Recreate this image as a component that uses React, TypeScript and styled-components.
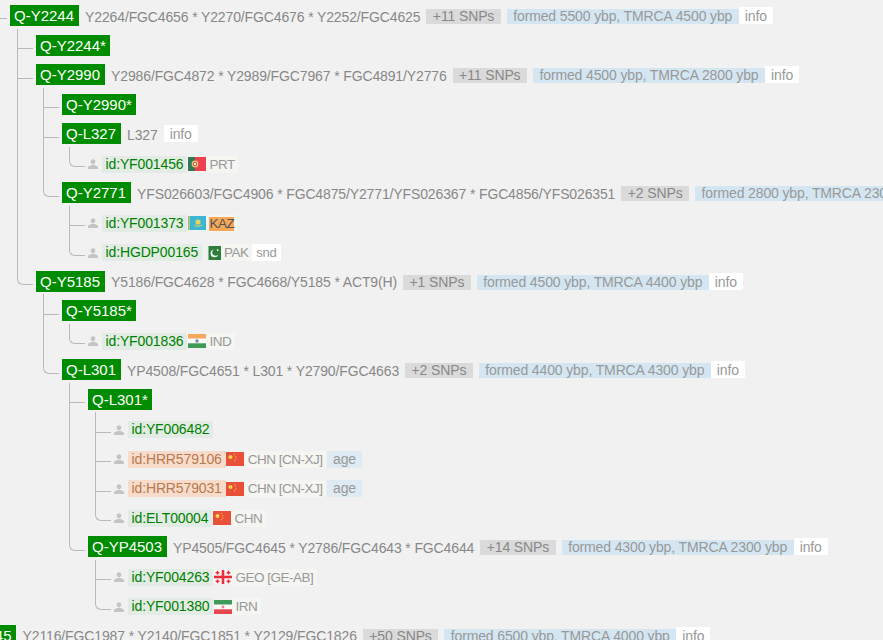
import React from "react";
import styled, { createGlobalStyle } from "styled-components";

const Global = createGlobalStyle`
  html, body { margin: 0; padding: 0; background: #f1f1f1; overflow: hidden; height: 640px; }
  body { font-family: "Liberation Sans", Arial, sans-serif; font-size: 14px; color: #888; letter-spacing: -0.13px; }
`;

const Page = styled.div`
  width: 883px;
  height: 640px;
  overflow: hidden;
  padding: 1.2px 0 0 9.5px;
  box-sizing: border-box;
`;

const Tree = styled.ul`
  list-style: none;
  margin: 0;
  padding: 0;
`;

const Branch = styled.ul`
  list-style: none;
  margin: 0;
  padding: 0 0 0 26px;
`;

const Item = styled.li<{ $last?: boolean; $root?: boolean }>`
  position: relative;
  &::before {
    content: "";
    position: absolute;
    box-sizing: border-box;
    left: -18.5px;
    top: ${(p) => (p.$root ? "17px" : "-2px")};
    width: 16px;
    height: ${(p) => (p.$root ? "1px" : "20.5px")};
    border-bottom: 1px solid #b9b9b9;
    border-left: ${(p) => (p.$root ? "0" : "1px solid #b9b9b9")};
    border-bottom-left-radius: ${(p) => (p.$last ? "6px" : "0")};
  }
  &::after {
    content: "";
    position: absolute;
    display: ${(p) => (p.$last || p.$root ? "none" : "block")};
    left: -18.5px;
    top: 0;
    bottom: 0;
    width: 1px;
    background: #b9b9b9;
  }
`;

const Row = styled.div<{ $shift?: number; $leaf?: boolean }>`
  display: flex;
  align-items: center;
  box-sizing: border-box;
  height: 29.5px;
  padding-top: ${(p) => (p.$leaf ? "2px" : "0")};
  white-space: nowrap;
  margin-left: ${(p) => p.$shift ?? 0}px;
`;

const Haplo = styled.span`
  flex: none;
  background: #008c00;
  color: #fff;
  font-size: 15px;
  letter-spacing: 0;
  line-height: 21px;
  height: 21px;
  padding: 0 4.5px;
  margin-right: 6.5px;
`;

const Snps = styled.span`
  color: #888;
  margin: 2px 6px 0 0;
`;

const SnpCount = styled.span`
  background: #dadada;
  color: #888;
  line-height: 15px;
  height: 15px;
  padding: 0 6.5px;
  margin: 2px 6px 0 0;
`;

const Age = styled.span`
  background: #d4e6f1;
  color: #999;
  line-height: 15px;
  height: 15px;
  padding: 0 6.5px;
  margin-top: 2px;
`;

const AgeTag = styled.span`
  background: #deebf3;
  color: #999;
  line-height: 17px;
  height: 17px;
  padding: 0 6px;
  margin-left: 1px;
`;

const Info = styled.span`
  background: #fff;
  color: #999;
  line-height: 19px;
  height: 17px;
  padding: 0 6px;
`;

const Person = styled.svg`
  flex: none;
  width: 10px;
  height: 10px;
  margin-right: 4px;
  color: #c4c4c4;
`;

const Sample = styled.span<{ $ancient?: boolean }>`
  flex: none;
  background: ${(p) => (p.$ancient ? "#f7dccb" : "#e2ece5")};
  color: ${(p) => (p.$ancient ? "#b8794f" : "#008000")};
  line-height: 17px;
  height: 17px;
  padding: 0 4px;
  margin-right: 0.5px;
`;

const Flag = styled.svg<{ $narrow?: boolean }>`
  flex: none;
  display: block;
  margin-left: ${(p) => (p.$narrow ? "4px" : "0")};
`;

const Country = styled.span`
  background: #f5f5f1;
  color: #999;
  font-size: 13.5px;
  letter-spacing: -0.5px;
  line-height: 18px;
  height: 17px;
  padding: 0 3.5px;
`;

const Marked = styled.span`
  background: #f7a758;
  color: #555;
  display: inline-block;
  line-height: 14px;
`;

const Lang = styled.span`
  background: #fff;
  color: #999;
  font-size: 13px;
  line-height: 18px;
  height: 17px;
  padding: 0 4px;
`;

type FlagCode = "pt" | "kz" | "pk" | "in" | "cn" | "ge" | "ir";

const FlagIcon = ({ code }: { code: FlagCode }) => {
  switch (code) {
    case "pt":
      return (
        <Flag width="18" height="14" viewBox="0 0 18 14">
          <rect width="7" height="14" fill="#2f7a55" />
          <rect x="7" width="11" height="14" fill="#ee4150" />
          <circle cx="7" cy="7" r="3.4" fill="#e8c46a" />
          <circle cx="7" cy="7" r="1.7" fill="#f1f1f1" stroke="#c8503f" />
        </Flag>
      );
    case "kz":
      return (
        <Flag width="18" height="14" viewBox="0 0 18 14">
          <rect width="18" height="14" fill="#3cb6d3" />
          <rect x="0.5" width="1.5" height="14" fill="#c8c46a" />
          <circle cx="10" cy="6" r="2.6" fill="#e8d45a" />
          <path d="M6 9.2c2 1.4 6 1.4 8 0" stroke="#e8d45a" fill="none" />
        </Flag>
      );
    case "pk":
      return (
        <Flag $narrow width="14" height="14" viewBox="0 0 14 14">
          <rect width="14" height="14" fill="#2e7d3c" />
          <rect width="1.5" height="14" fill="#e8f0ea" />
          <circle cx="7.5" cy="7.3" r="3.9" fill="#f4f8f4" />
          <circle cx="8.8" cy="6.2" r="3.5" fill="#2e7d3c" />
          <circle cx="10.6" cy="4.2" r="0.9" fill="#f4f8f4" />
        </Flag>
      );
    case "in":
      return (
        <Flag width="18" height="14" viewBox="0 0 18 14">
          <rect width="18" height="4.7" fill="#f6a85c" />
          <rect y="4.7" width="18" height="4.6" fill="#fafafa" />
          <rect y="9.3" width="18" height="4.7" fill="#3f9a5a" />
          <circle cx="9" cy="7" r="1.7" fill="#7a84b8" />
        </Flag>
      );
    case "cn":
      return (
        <Flag width="18" height="14" viewBox="0 0 18 14">
          <rect width="18" height="14" fill="#e8503a" />
          <circle cx="4.5" cy="5" r="2" fill="#f6d64a" />
          <circle cx="8.5" cy="2.5" r="0.6" fill="#f6d64a" />
          <circle cx="9.8" cy="4.5" r="0.6" fill="#f6d64a" />
          <circle cx="9.8" cy="6.8" r="0.6" fill="#f6d64a" />
          <circle cx="8.5" cy="8.8" r="0.6" fill="#f6d64a" />
        </Flag>
      );
    case "ge":
      return (
        <Flag width="18" height="14" viewBox="0 0 18 14">
          <rect width="18" height="14" fill="#fafafa" />
          <rect x="7.7" width="2.6" height="14" fill="#ee2f3a" />
          <rect y="5.7" width="18" height="2.6" fill="#ee2f3a" />
          <path d="M3.5 0.8v3.8M1.6 2.7h3.8M14.5 0.8v3.8M12.6 2.7h3.8M3.5 9.4v3.8M1.6 11.3h3.8M14.5 9.4v3.8M12.6 11.3h3.8" stroke="#ee2f3a" strokeWidth="1.5" />
        </Flag>
      );
    case "ir":
      return (
        <Flag width="18" height="14" viewBox="0 0 18 14">
          <rect width="18" height="4.7" fill="#3f9a5a" />
          <rect y="4.7" width="18" height="4.6" fill="#fafafa" />
          <rect y="9.3" width="18" height="4.7" fill="#e8474f" />
          <circle cx="9" cy="7" r="1.4" fill="#e8878b" />
        </Flag>
      );
  }
};

const PersonIcon = () => (
  <Person viewBox="0 0 10 10">
    <path d="M5 0.2c1.4 0 2.3 1 2.3 2.4S6.4 5.4 5 5.4 2.7 4 2.7 2.6 3.6 0.2 5 0.2z" fill="currentColor" />
    <path d="M0 10V8.4C0 7.2 2 6.6 3.5 6h3C8 6.6 10 7.2 10 8.4V10z" fill="currentColor" />
  </Person>
);

type Node = {
  name?: string;
  snps?: string;
  count?: string;
  age?: string;
  info?: boolean;
  id?: string;
  ancient?: boolean;
  flag?: FlagCode;
  country?: string;
  mark?: boolean;
  lang?: string;
  ageTag?: boolean;
  children?: Node[];
};

const tree: Node = {
  name: "Q-Y2244",
  snps: "Y2264/FGC4656 * Y2270/FGC4676 * Y2252/FGC4625",
  count: "+11 SNPs",
  age: "formed 5500 ybp, TMRCA 4500 ybp",
  info: true,
  children: [
    { name: "Q-Y2244*" },
    {
      name: "Q-Y2990",
      snps: "Y2986/FGC4872 * Y2989/FGC7967 * FGC4891/Y2776",
      count: "+11 SNPs",
      age: "formed 4500 ybp, TMRCA 2800 ybp",
      info: true,
      children: [
        { name: "Q-Y2990*" },
        {
          name: "Q-L327",
          snps: "L327",
          info: true,
          children: [{ id: "id:YF001456", flag: "pt", country: "PRT" }],
        },
        {
          name: "Q-Y2771",
          snps: "YFS026603/FGC4906 * FGC4875/Y2771/YFS026367 * FGC4856/YFS026351",
          count: "+2 SNPs",
          age: "formed 2800 ybp, TMRCA 2300 ybp",
          info: true,
          children: [
            { id: "id:YF001373", flag: "kz", country: "KAZ", mark: true },
            { id: "id:HGDP00165", flag: "pk", country: "PAK", lang: "snd" },
          ],
        },
      ],
    },
    {
      name: "Q-Y5185",
      snps: "Y5186/FGC4628 * FGC4668/Y5185 * ACT9(H)",
      count: "+1 SNPs",
      age: "formed 4500 ybp, TMRCA 4400 ybp",
      info: true,
      children: [
        {
          name: "Q-Y5185*",
          children: [{ id: "id:YF001836", flag: "in", country: "IND" }],
        },
        {
          name: "Q-L301",
          snps: "YP4508/FGC4651 * L301 * Y2790/FGC4663",
          count: "+2 SNPs",
          age: "formed 4400 ybp, TMRCA 4300 ybp",
          info: true,
          children: [
            {
              name: "Q-L301*",
              children: [
                { id: "id:YF006482" },
                { id: "id:HRR579106", ancient: true, flag: "cn", country: "CHN [CN-XJ]", ageTag: true },
                { id: "id:HRR579031", ancient: true, flag: "cn", country: "CHN [CN-XJ]", ageTag: true },
                { id: "id:ELT00004", flag: "cn", country: "CHN" },
              ],
            },
            {
              name: "Q-YP4503",
              snps: "YP4505/FGC4645 * Y2786/FGC4643 * FGC4644",
              count: "+14 SNPs",
              age: "formed 4300 ybp, TMRCA 2300 ybp",
              info: true,
              children: [
                { id: "id:YF004263", flag: "ge", country: "GEO [GE-AB]" },
                { id: "id:YF001380", flag: "ir", country: "IRN" },
              ],
            },
          ],
        },
      ],
    },
  ],
};

const nextTree: Node = {
  name: "Q-Y2145",
  snps: "Y2116/FGC1987 * Y2140/FGC1851 * Y2129/FGC1826",
  count: "+50 SNPs",
  age: "formed 6500 ybp, TMRCA 4000 ybp",
  info: true,
};

const RowContent = ({ node }: { node: Node }) => (
  <>
    {node.name && <Haplo>{node.name}</Haplo>}
    {node.snps && <Snps>{node.snps}</Snps>}
    {node.count && <SnpCount>{node.count}</SnpCount>}
    {node.age && <Age>{node.age}</Age>}
    {node.info && <Info>info</Info>}
    {node.id && (
      <>
        <PersonIcon />
        <Sample $ancient={node.ancient}>{node.id}</Sample>
      </>
    )}
    {node.flag && <FlagIcon code={node.flag} />}
    {node.country && (
      <Country>{node.mark ? <Marked>{node.country}</Marked> : node.country}</Country>
    )}
    {node.ageTag && <AgeTag>age</AgeTag>}
    {node.lang && <Lang>{node.lang}</Lang>}
  </>
);

const TreeNode = ({ node, last, root }: { node: Node; last?: boolean; root?: boolean }) => (
  <Item $last={last} $root={root}>
    <Row $leaf={!!node.id}>
      <RowContent node={node} />
    </Row>
    {node.children && (
      <Branch>
        {node.children.map((c, i) => (
          <TreeNode key={c.name ?? c.id} node={c} last={i === node.children!.length - 1} />
        ))}
      </Branch>
    )}
  </Item>
);

export default function App() {
  return (
    <Page>
      <Global />
      <Tree>
        <TreeNode node={tree} root />
        <li>
          <Row $shift={-62.5}>
            <RowContent node={nextTree} />
          </Row>
        </li>
      </Tree>
    </Page>
  );
}
